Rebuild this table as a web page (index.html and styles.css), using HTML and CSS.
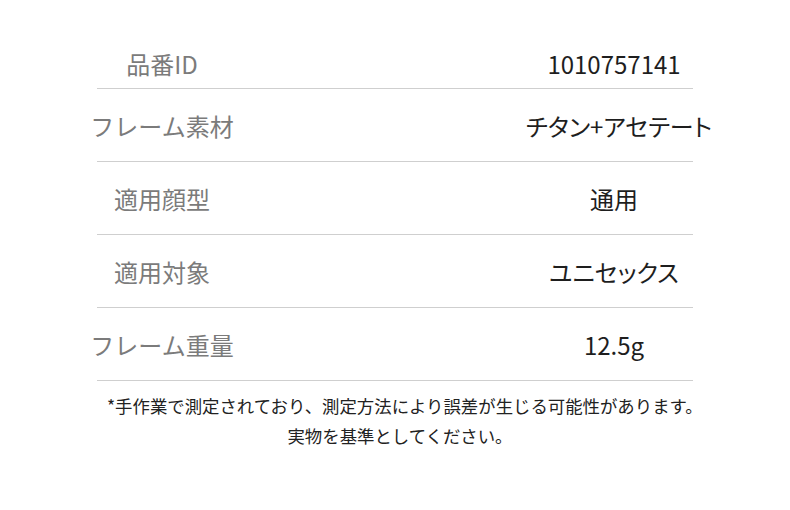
FILE: index.html
```html
<!DOCTYPE html>
<html lang="ja">
<head>
<meta charset="utf-8">
<link rel="stylesheet" href="styles.css">
</head>
<body>
<div class="spec">
  <div class="row first">
    <div class="label">品番ID</div>
    <div class="value">1010757141</div>
  </div>
  <div class="row">
    <div class="label">フレーム素材</div>
    <div class="value shift">チタン+アセテート</div>
  </div>
  <div class="row">
    <div class="label">適用顔型</div>
    <div class="value">通用</div>
  </div>
  <div class="row">
    <div class="label">適用対象</div>
    <div class="value">ユニセックス</div>
  </div>
  <div class="row">
    <div class="label">フレーム重量</div>
    <div class="value">12.5g</div>
  </div>
  <p class="note">*手作業で測定されており、測定方法により誤差が生じる可能性があります。<br>実物を基準としてください。</p>
</div>
</body>
</html>
```

FILE: styles.css
```css
html, body {
  margin: 0;
  padding: 0;
  background: #fff;
}
body {
  font-family: "Noto Sans CJK JP", "Noto Sans", sans-serif;
  width: 790px;
  height: 510px;
  overflow: hidden;
}
.spec {
  width: 596px;
  margin: 40px 0 0 97px;
}
.row {
  display: grid;
  grid-template-columns: 130px 1fr 158px;
  border-bottom: 1px solid #cfcfcf;
  align-items: center;
  padding-top: 2px;
  box-sizing: content-box;
  height: 70px;
}
.row.first {
  height: 48px;
  padding-top: 0;
}
.label, .value {
  display: flex;
  justify-content: center;
  white-space: nowrap;
  font-size: 24px;
  line-height: 30px;
}
.label {
  grid-column: 1;
  color: #7b7b7b;
}
.value {
  grid-column: 3;
  color: #1e1e1e;
  font-feature-settings: "palt";
}
.value.shift {
  padding-left: 10px;
}
.note {
  margin: 10px 0 0;
  padding-left: 10px;
  text-align: center;
  font-size: 17.4px;
  line-height: 30px;
  color: #222;
  white-space: nowrap;
}
```
